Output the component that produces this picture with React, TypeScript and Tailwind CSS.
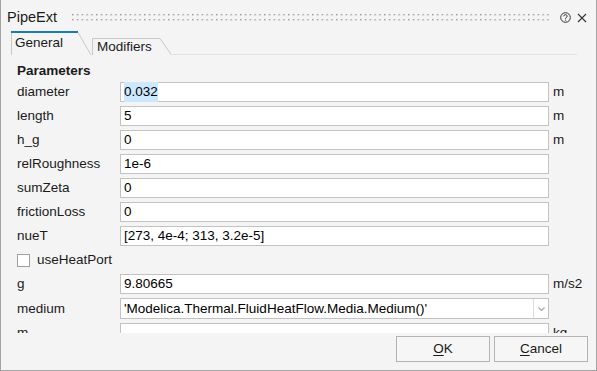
import React from "react";

const font = { fontFamily: '"Liberation Sans", Arial, sans-serif' };

interface Param {
  name: string;
  value: string;
  unit?: string;
  selected?: boolean;
}

const params: Param[] = [
  { name: "diameter", value: "0.032", unit: "m", selected: true },
  { name: "length", value: "5", unit: "m" },
  { name: "h_g", value: "0", unit: "m" },
  { name: "relRoughness", value: "1e-6" },
  { name: "sumZeta", value: "0" },
  { name: "frictionLoss", value: "0" },
  { name: "nueT", value: "[273, 4e-4; 313, 3.2e-5]" },
];

const ParamRow: React.FC<{ p: Param }> = ({ p }) => (
  <div className="flex h-[20px] items-center">
    <div className="w-[103px] text-[13.5px] text-[#1a1a1a]">{p.name}</div>
    <div className="flex h-[20px] w-[429px] items-center border border-[#c2c2c2] bg-white px-[3px] text-[13.5px] text-black">
      {p.selected ? <span className="bg-[#cce8ff]">{p.value}</span> : p.value}
    </div>
    <div className="pl-[4px] text-[13.5px] text-[#1a1a1a]">{p.unit}</div>
  </div>
);

export default function App() {
  return (
    <div
      style={font}
      className="flex h-[371px] w-[597px] flex-col overflow-hidden border-x border-b border-[#a3a3a3] bg-[#f4f4f4]"
    >
      {/* Title bar */}
      <div className="flex h-[31px] shrink-0 items-center pl-[6px] pr-[9px] pt-[4px]">
        <span className="text-[14.5px] text-[#1a1a1a]">PipeExt</span>
        <svg className="ml-[15px] h-[10px] flex-1" aria-hidden>
          <defs>
            <pattern id="grip" width="4.8" height="10" patternUnits="userSpaceOnUse">
              <rect x="0" y="1" width="1.4" height="1.4" fill="#9a9a9a" />
              <rect x="0" y="6" width="1.4" height="1.4" fill="#9a9a9a" />
            </pattern>
          </defs>
          <rect width="100%" height="10" fill="url(#grip)" />
        </svg>
        <svg className="ml-[8px]" width="11" height="11" viewBox="0 0 11 11" aria-hidden>
          <circle cx="5.5" cy="5.5" r="4.8" fill="none" stroke="#333" strokeWidth="1" />
          <path d="M3.9 4.3a1.6 1.6 0 1 1 2.3 1.4c-.5.3-.7.5-.7 1.1" fill="none" stroke="#333" strokeWidth="1" />
          <circle cx="5.5" cy="8.1" r="0.6" fill="#333" />
        </svg>
        <svg className="ml-[6px]" width="10" height="10" viewBox="0 0 10 10" aria-hidden>
          <path d="M1 1l8 8M9 1l-8 8" stroke="#333" strokeWidth="1.1" />
        </svg>
      </div>

      {/* Tabs */}
      <div className="relative flex h-[24px] shrink-0 items-end pl-[10px]">
        <div className="relative flex h-[24px] w-[81px] items-center pl-[4px] pt-[1px]">
          <svg className="absolute inset-0" width="81" height="24" aria-hidden>
            <path d="M0.5 24V1.5H67L80 24" fill="#f4f4f4" stroke="#c8c8c8" />
            <rect x="0" y="0" width="67" height="2" fill="#1a7bb0" />
          </svg>
          <span className="relative text-[13.5px] text-[#1a1a1a]">General</span>
        </div>
        <div className="relative flex h-[17px] w-[80px] items-center pl-[5px] pt-[1px]">
          <svg className="absolute inset-0" width="80" height="17" aria-hidden>
            <path d="M0.5 17V0.5H68L79.5 17" fill="#f4f4f4" stroke="#c8c8c8" />
          </svg>
          <span className="relative text-[13.5px] text-[#1a1a1a]">Modifiers</span>
        </div>
        <div className="absolute bottom-0 left-[170px] right-[19px] h-px bg-[#e2e2e2]" />
      </div>

      {/* Parameters */}
      <div className="h-[278px] shrink-0 overflow-hidden pl-[16px] pt-[6px]">
        <div className="mb-[1px] text-[13.5px] font-bold text-[#1a1a1a]">Parameters</div>
        <div className="flex flex-col gap-[4px]">
          {params.map((p) => (
            <ParamRow key={p.name} p={p} />
          ))}
          <div className="flex h-[20px] items-center">
            <div className="h-[13px] w-[13px] border border-[#a0a0a0] bg-white" />
            <span className="pl-[7px] text-[13.5px] text-[#1a1a1a]">useHeatPort</span>
          </div>
          <ParamRow p={{ name: "g", value: "9.80665", unit: "m/s2" }} />
          <div className="flex h-[21px] items-center">
            <div className="w-[103px] text-[13.5px] text-[#1a1a1a]">medium</div>
            <div className="flex h-[21px] w-[429px] items-center border border-[#c2c2c2] bg-white text-[13.5px] text-black">
              <span className="flex-1 px-[3px]">'Modelica.Thermal.FluidHeatFlow.Media.Medium()'</span>
              <div className="flex h-full w-[15px] items-center justify-center border-l border-[#dcdcdc]">
                <svg width="7" height="4" viewBox="0 0 7 4" aria-hidden>
                  <path d="M0.5 0.5L3.5 3.5L6.5 0.5" fill="none" stroke="#a8a8a8" strokeWidth="1.2" />
                </svg>
              </div>
            </div>
          </div>
          <ParamRow p={{ name: "m", value: "", unit: "kg" }} />
        </div>
      </div>

      {/* Buttons */}
      <div className="flex flex-1 items-start justify-end gap-[4px] pr-[8px] pt-[3px]">
        <button className="flex h-[26px] w-[94px] items-center justify-center border border-[#b4b4b4] bg-[#f6f6f6] text-[13.5px] text-[#1a1a1a]">
          <span className="underline decoration-1 underline-offset-2">O</span>K
        </button>
        <button className="flex h-[26px] w-[94px] items-center justify-center border border-[#b4b4b4] bg-[#f6f6f6] text-[13.5px] text-[#1a1a1a]">
          <span className="underline decoration-1 underline-offset-2">C</span>ancel
        </button>
      </div>
    </div>
  );
}
